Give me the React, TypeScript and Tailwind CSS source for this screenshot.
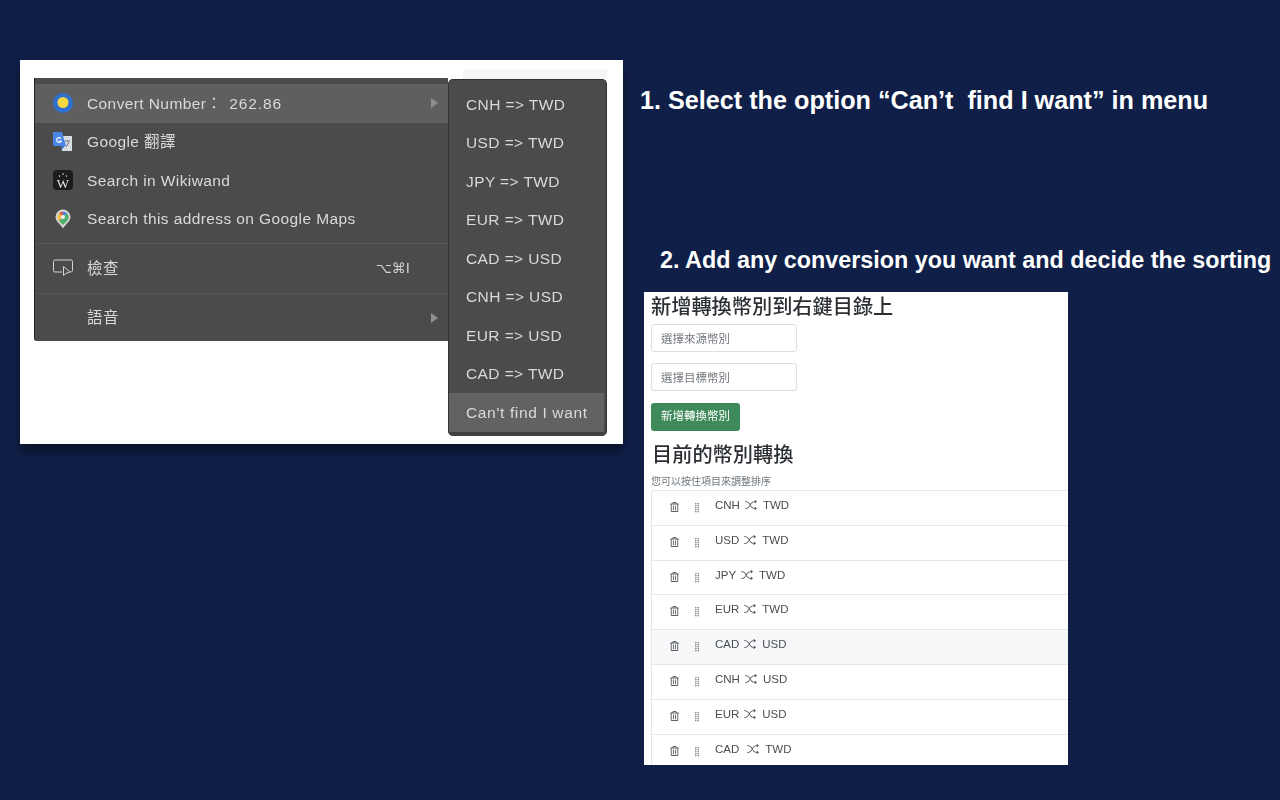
import React from 'react';
import { BsShuffle } from 'react-icons/bs';
import { FaRegTrashAlt } from 'react-icons/fa';

const cjk = 'font-["Liberation_Sans","Noto_Sans_CJK_TC",sans-serif]';

const subItems = ['CNH => TWD', 'USD => TWD', 'JPY => TWD', 'EUR => TWD', 'CAD => USD', 'CNH => USD', 'EUR => USD', 'CAD => TWD'];

const rows = [
  { from: 'CNH', to: 'TWD' },
  { from: 'USD', to: 'TWD' },
  { from: 'JPY', to: 'TWD' },
  { from: 'EUR', to: 'TWD' },
  { from: 'CAD', to: 'USD', active: true },
  { from: 'CNH', to: 'USD' },
  { from: 'EUR', to: 'USD' },
  { from: 'CAD', to: 'TWD', wide: true },
];

const ConvertIcon = () => (
  <svg width="20" height="20" viewBox="0 0 20 20">
    <circle cx="10" cy="10" r="10" fill="#2f6fd0" />
    <circle cx="10" cy="9.500" r="5.500" fill="#f5d742" />
  </svg>
);

const TranslateIcon = () => (
  <svg width="20" height="20" viewBox="0 0 20 20">
    <path d="M8 4h11v15H9z" fill="#d8dde2" />
    <path d="M12 9h5M14.500 8v1M13 15l3-5" stroke="#6b7680" strokeWidth="1" fill="none" />
    <path d="M0 0h9l4 14H1.500A1.500 1.500 0 0 1 0 12.500z" fill="#4a86e8" />
    <path d="M9 14l-1 4 4-4z" fill="#3367c7" />
    <path d="M8 6.500A2.400 2.400 0 1 0 8.300 9H6" stroke="#fff" strokeWidth="1.200" fill="none" />
  </svg>
);

const WikiwandIcon = () => (
  <div className="w-[20px] h-[20px] rounded-[4px] bg-[#1c1c1f] flex flex-col items-center justify-end">
    <svg width="10" height="4" viewBox="0 0 10 4" fill="#e8e8e8">
      <circle cx="1.500" cy="3" r="0.700" />
      <circle cx="5" cy="1" r="0.800" />
      <circle cx="8.500" cy="3" r="0.700" />
    </svg>
    <span className="text-[#e8e8e8] text-[13px] leading-[13px] font-['Liberation_Serif',serif]">W</span>
  </div>
);

const MapsIcon = () => (
  <svg width="20" height="20" viewBox="0 0 20 20">
    <path d="M10 0.500a7.500 7.500 0 0 0-7.500 7.500c0 4.500 5 7 7.500 11.500 2.500-4.500 7.500-7 7.500-11.500A7.500 7.500 0 0 0 10 0.500z" fill="#d6d6d6" />
    <path d="M10 2.500a5.500 5.500 0 0 0-4 1.700L10 8z" fill="#e0584b" />
    <path d="M10 2.500V8l4 -3.800a5.500 5.500 0 0 0-4-1.700z" fill="#4a86e8" />
    <path d="M4.500 8a5.500 5.500 0 0 1 1.500-3.800L10 8l-4 4a5.500 5.500 0 0 1-1.500-4z" fill="#f2bd42" />
    <path d="M10 8l4-3.800A5.500 5.500 0 0 1 14 12L10 16l-4-4z" fill="#4caf6a" />
    <circle cx="10" cy="8" r="2" fill="#f4f4f4" />
  </svg>
);

const InspectIcon = () => (
  <svg width="20" height="18" viewBox="0 0 20 18" fill="none" stroke="#d4d4d4" strokeWidth="1">
    <path d="M9 13H2a1.500 1.500 0 0 1-1.500-1.500v-9A1.500 1.500 0 0 1 2 1h16a1.500 1.500 0 0 1 1.500 1.500v9A1.500 1.500 0 0 1 18 13h-.5" />
    <path d="M10.500 7.500v9l2.200-2 4.300-1.500z" />
  </svg>
);

const Caret = () => <div className="w-0 h-0 border-y-[5px] border-y-transparent border-l-[7px] border-l-[#8f8f8f]" />;

const MenuRow = ({ icon, label, active, children }: { icon?: React.ReactNode; label: React.ReactNode; active?: boolean; children?: React.ReactNode }) => (
  <div className={`h-[38.5px] flex items-center pl-[18px] pr-[10px] ${active ? 'bg-[#5f5f5f]' : ''}`}>
    <div className="w-[20px] flex justify-center">{icon}</div>
    <span className="ml-[14px] text-[15.5px] tracking-[0.4px] text-[#d9d9d9] whitespace-nowrap">{label}</span>
    <div className="ml-auto flex items-center">{children}</div>
  </div>
);

const GripIcon = () => (
  <svg width="4" height="10" viewBox="0 0 4 10" fill="#8a8a8a">
    {[0, 2, 4, 6, 8].map((y) => (
      <g key={y}>
        <rect x="0" y={y} width="1.500" height="1.300" />
        <rect x="2.500" y={y} width="1.500" height="1.300" />
      </g>
    ))}
  </svg>
);

export default function App() {
  return (
    <div className={`w-[1280px] h-[800px] overflow-hidden bg-[#101f48] flex ${cjk}`}>
      <div className="w-[640px] shrink-0 pl-[20px] pt-[60px]">
        <div className="w-[603px] h-[384px] bg-white shadow-[0_8px_10px_rgba(0,0,0,0.4)] flex items-start pl-[14px] pt-[9px]">
          <div className="mt-[9px] w-[414px] h-[263px] bg-[#4b4b4b] border-l border-[#222] rounded-bl-[3px] pt-[6px] blur-[0.4px]">
            <MenuRow active icon={<ConvertIcon />} label={<>Convert Number：<span className="ml-[7px] tracking-[0.9px]">262.86</span></>}>
              <Caret />
            </MenuRow>
            <MenuRow icon={<TranslateIcon />} label="Google 翻譯" />
            <MenuRow icon={<WikiwandIcon />} label="Search in Wikiwand" />
            <MenuRow icon={<MapsIcon />} label="Search this address on Google Maps" />
            <div className="h-px bg-[#565656] mt-[5px] mb-[5px]" />
            <MenuRow icon={<InspectIcon />} label="檢查">
              <span className="mr-[28px] text-[14px] text-[#d0d0d0] font-['DejaVu_Sans',sans-serif]">⌥⌘I</span>
            </MenuRow>
            <div className="h-px bg-[#565656] mt-[5px] mb-[5px]" />
            <MenuRow label="語音">
              <Caret />
            </MenuRow>
          </div>
          <div className="w-[159px] flex flex-col">
            <div className="ml-[15px] h-[10px] bg-[#f6f6f6]" />
            <div className="h-[357px] bg-[#4b4b4b] border-x-[1px] border-t border-[#333] rounded-[5px] pt-[5px] pr-[2px] shadow-[inset_0_-5px_0_#424242] blur-[0.4px]">
              {subItems.map((item) => (
                <div key={item} className="h-[38.5px] flex items-center pl-[17px] text-[15.5px] tracking-[0.4px] text-[#d9d9d9] whitespace-nowrap">{item}</div>
              ))}
              <div className="h-[38.5px] flex items-center pl-[17px] text-[15.5px] tracking-[0.65px] text-[#d9d9d9] whitespace-nowrap bg-[#626262]">Can't find I want</div>
            </div>
          </div>
        </div>
      </div>
      <div className="flex-1 flex flex-col pt-[86px]">
        <h1 className="text-[25.2px] leading-[28px] font-bold text-white whitespace-nowrap">1. Select the option “Can’t&nbsp; find I want” in menu</h1>
        <h2 className="mt-[132px] ml-[20px] text-[23.35px] leading-[28px] font-bold text-white whitespace-nowrap">2. Add any conversion you want and decide the sorting</h2>
        <div className="mt-[18px] ml-[4px] w-[424px] h-[473px] bg-white overflow-hidden pl-[7px] blur-[0.3px]">
          <div className="text-[20.2px] leading-[30px] font-medium text-[#2b2f33]">新增轉換幣別到右鍵目錄上</div>
          <div className="mt-[2px] w-[146px] h-[28px] border border-[#dcdfe3] rounded-[3px] flex items-center pl-[9px] text-[11.5px] leading-[14px] pt-[2px] text-[#74797f]">選擇來源幣別</div>
          <div className="mt-[11px] w-[146px] h-[28px] border border-[#dcdfe3] rounded-[3px] flex items-center pl-[9px] text-[11.5px] leading-[14px] pt-[2px] text-[#74797f]">選擇目標幣別</div>
          <div className="mt-[12px] w-[89px] h-[28px] bg-[#3f8a5a] rounded-[3px] flex items-center justify-center text-[11.5px] text-white">新增轉換幣別</div>
          <div className="mt-[9px] ml-px text-[20.2px] leading-[30px] font-medium text-[#2b2f33]">目前的幣別轉換</div>
          <div className="mt-[5px] text-[10px] leading-[14px] text-[#6c757d]">您可以按住項目來調整排序</div>
          <div className="mt-[1px] border-t border-l border-[#e6e7e9] rounded-tl-[3px]">
            {rows.map((row) => (
              <div key={row.from + row.to} className={`h-[34.8px] border-b border-[#e6e7e9] flex pl-[18px] pt-[7px] ${row.active ? 'bg-[#f7f8fa]' : ''}`}>
                <FaRegTrashAlt className="mt-[4px] w-[9px] h-[10px] text-[#5c5f63]" />
                <div className="ml-[16px] mt-[5px]"><GripIcon /></div>
                <div className="ml-[16px] flex items-start text-[11.5px] leading-[15px] text-[#4a4d52]">
                  <span>{row.from}</span>
                  <BsShuffle className={`${row.wide ? 'ml-[8px]' : 'ml-[5px]'} mr-[6px] mt-[1px] w-[12px] h-[12px]`} />
                  <span>{row.to}</span>
                </div>
              </div>
            ))}
          </div>
        </div>
      </div>
    </div>
  );
}
